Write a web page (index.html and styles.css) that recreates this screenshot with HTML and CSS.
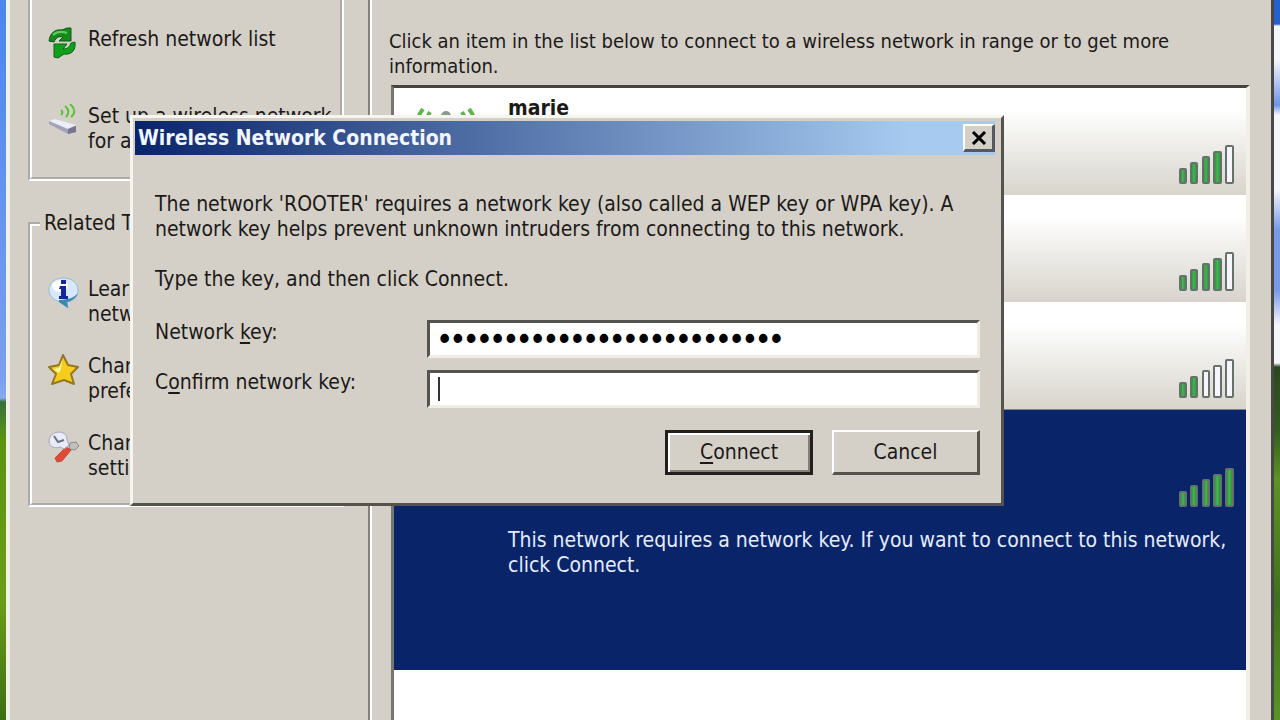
FILE: index.html
```html
<!DOCTYPE html>
<html lang="en">
<head>
    <meta charset="UTF-8">
    <title>Wireless Network Connection</title>
    <link rel="stylesheet" href="styles.css">
</head>
<body>
    <svg class="sprites" aria-hidden="true">
        <linearGradient id="bar-fill" x1="0" x2="1" y1="0" y2="0">
            <stop offset="0" stop-color="#2a8a40"/>
            <stop offset="0.5" stop-color="#45b552"/>
            <stop offset="1" stop-color="#1f8a38"/>
        </linearGradient>
        <symbol id="bars" viewBox="0 0 58 42">
            <rect class="bar b1" x="2" y="25" width="6" height="14" rx="1"/>
            <rect class="bar b2" x="13" y="19" width="6" height="20" rx="1"/>
            <rect class="bar b3" x="25" y="13" width="6" height="26" rx="1"/>
            <rect class="bar b4" x="36" y="8" width="7" height="31" rx="1"/>
            <rect class="bar b5" x="48" y="2" width="7" height="37" rx="1"/>
        </symbol>
    </svg>

    <div class="window">
        <aside class="sidebar">
            <section class="group group-top">
                <a class="task" href="#">
                    <svg class="icon" viewBox="0 0 32 32">
                        <path d="M1 14C2 6 7 2 14 3l5-2h4v13H11l4-4c-4-1-7 0-9 5z" fill="#178a1c" stroke="#0b5a12"/>
                        <path d="M5 8c4-4 8-4 14-2" fill="none" stroke="#5fc95a" stroke-width="2"/>
                        <path d="M27 15c1 8-3 13-11 12l-6 4-4-1V17h13l-4 5c5 0 7-3 8-6z" fill="#12a01c" stroke="#0b6514"/>
                    </svg>
                    <span>Refresh network list</span>
                </a>
                <a class="task" href="#">
                    <svg class="icon" viewBox="0 0 32 32">
                        <path d="M1 17l5-1 22 6v6l-8 2L1 20z" fill="#a3a2b8"/>
                        <path d="M1 17l6-2 21 6-8 4z" fill="#eeeef8"/>
                        <path d="M20 25v5l8-2v-6z" fill="#77758e"/>
                        <path d="M13 6q3 2 0 5M17 2q6 5 1 11M22 0q8 7 1 13" fill="none" stroke="#58c239" stroke-width="2"/>
                    </svg>
                    <span>Set up a wireless network for a home or small office</span>
                </a>
            </section>
            <fieldset class="group">
                <legend>Related Tasks</legend>
                <a class="task" href="#">
                    <svg class="icon" viewBox="0 0 32 32">
                        <path d="M15 1C7 1 1 6 1 13c0 6 5 10 11 12l8 6-1-6c7-1 11-5 11-12C30 6 24 1 15 1z" fill="#d6e9fa" stroke="#9dbad6"/>
                        <path d="M11 25l9 6-1-6c5-1 9-4 11-9-4 5-11 7-19 7z" fill="#3a86b4"/>
                        <ellipse cx="12" cy="9" rx="8" ry="6" fill="#fff"/>
                        <path d="M12 9h6v10h2v3h-9v-3h2v-7h-2zM13 3h5v4h-5z" fill="#14279c"/>
                    </svg>
                    <span>Learn about wireless networking</span>
                </a>
                <a class="task" href="#">
                    <svg class="icon" viewBox="0 0 32 32">
                        <path d="M15 1l5 10 10 2-7 7 3 10-10-4-12 4 4-10-7-7 10-2z" fill="#f4cd1d" stroke="#967720" stroke-width="2" stroke-linejoin="round"/>
                        <path d="M14 6l-3 8-6 1 6 4 2-4z" fill="#fff59a"/>
                    </svg>
                    <span>Change the order of preferred networks</span>
                </a>
                <a class="task" href="#">
                    <svg class="icon" viewBox="0 0 32 32">
                        <path d="M22 12l6-1 3 4-4 4-6-1z" fill="#c2c0bc" stroke="#8c8a86"/>
                        <path d="M18 16l5 3-9 11-5 1-2-4z" fill="#e24a35" stroke="#b8503f"/>
                        <path d="M12 1C5 1 1 5 1 11c1 5 6 7 11 5l4 2 5-4-2-5c0-5-2-7-7-8z" fill="#e9ebf8" stroke="#a3a5b8"/>
                        <path d="M6 5l4 6 6-2" fill="none" stroke="#6f7286" stroke-width="2"/>
                    </svg>
                    <span>Change advanced<br>settings</span>
                </a>
            </fieldset>
        </aside>

        <main class="content">
            <p class="intro">Click an item in the list below to connect to a wireless network in range or to get more information.</p>
            <ul class="networks">
                <li class="network">
                    <svg class="antenna" viewBox="0 0 64 40">
                        <path d="M9 1Q-3 16 9 32M16 4Q8 16 16 28M55 1q12 15 0 31M48 4q8 12 0 24" fill="none" stroke="#5fb44a" stroke-width="4"/>
                        <circle cx="32" cy="8" r="5" fill="#8d9a90"/>
                        <path d="M30 12h4v26h-4z" fill="#777"/>
                    </svg>
                    <div class="info"><strong>marie</strong></div>
                    <svg class="signal s4" viewBox="0 0 58 42"><use href="#bars"/></svg>
                </li>
                <li class="network">
                    <div class="info"></div>
                    <svg class="signal s4" viewBox="0 0 58 42"><use href="#bars"/></svg>
                </li>
                <li class="network">
                    <div class="info"></div>
                    <svg class="signal s2" viewBox="0 0 58 42"><use href="#bars"/></svg>
                </li>
                <li class="network selected">
                    <div class="info">
                        <div class="security">
                            <svg class="lock" viewBox="0 0 16 20">
                                <path d="M4 9V5q4-6 8 0v4" fill="none" stroke="#b9b08a" stroke-width="2"/>
                                <path d="M1 8h14v8q-7 6-14 0z" fill="#e6c04a"/>
                            </svg>
                            <span>Security-enabled wireless network</span>
                        </div>
                        <p>This network requires a network key. If you want to connect to this network, click Connect.</p>
                    </div>
                    <svg class="signal s5" viewBox="0 0 58 42"><use href="#bars"/></svg>
                </li>
            </ul>
        </main>
    </div>

    <form class="dialog" role="dialog" aria-labelledby="dialog-title">
        <header class="titlebar">
            <h1 id="dialog-title">Wireless Network Connection</h1>
            <button type="button" class="close" aria-label="Close">
                <svg viewBox="0 0 16 14"><path d="M2 1l12 12M14 1L2 13" stroke="#000" stroke-width="3"/></svg>
            </button>
        </header>
        <div class="dialog-body">
            <p>The network 'ROOTER' requires a network key (also called a WEP key or WPA key). A network key helps prevent unknown intruders from connecting to this network.</p>
            <p>Type the key, and then click Connect.</p>
            <div class="field">
                <label for="key">Network <u>k</u>ey:</label>
                <input type="password" id="key" value="abcdefghijklmnopqrstuvwxyz">
            </div>
            <div class="field">
                <label for="confirm">C<u>o</u>nfirm network key:</label>
                <input type="password" id="confirm" class="active">
            </div>
            <div class="actions">
                <button type="button" class="btn default"><span><u>C</u>onnect</span></button>
                <button type="button" class="btn"><span>Cancel</span></button>
            </div>
        </div>
    </form>
</body>
</html>
```

FILE: styles.css
```css
* {
    box-sizing: border-box;
}
body {
    margin: 0;
    height: 100vh;
    overflow: hidden;
    padding: 0 6px;
    font-family: "DejaVu Sans Condensed", "DejaVu Sans", sans-serif;
    font-size: 21px;
    line-height: 25px;
    color: #1c1a18;
    background:
        linear-gradient(#2560d0 0 24px, #f4f6fc 26px 60px, #6f94e6 105px, #f4f6fc 115px 190px, #7799e8 230px 290px, #f4f6fc 325px 363px, #2c4720 367px, #335c22 430px, #5d9424 480px, #3f6f20 600px, #5a9424 720px) right / 8px 100% no-repeat,
        linear-gradient(#4a86ee, #7aa0f0 380px, #8aaaf0 398px, #39703a 402px, #5a9412 440px, #6d9c18 600px, #3b6f14 720px);
}
p, h1, ul {
    margin: 0;
    padding: 0;
}
.sprites {
    position: absolute;
    width: 0;
    height: 0;
}
.window {
    display: flex;
    height: 100%;
    background: #d4d0c8;
    border-left: 4px solid #f2f2e8;
    border-right: 3px solid #4a4844;
}

/* task pane */
.sidebar {
    width: 360px;
    flex: none;
    padding: 0 24px 0 18px;
    border-right: 2px solid #848078;
}
.group {
    margin: 0 0 30px;
    border: 4px groove #fff;
    padding: 41px 0 0 16px;
    height: 296px;
}
.group-top {
    border-top: 0;
    height: 181px;
    padding-top: 27px;
}
.group legend {
    padding: 0 4px;
    margin-left: -8px;
}
.task {
    display: flex;
    gap: 8px;
    height: 77px;
    color: inherit;
    text-decoration: none;
}
.icon {
    width: 32px;
    height: 32px;
    flex: none;
}

/* network list */
.content {
    flex: 1;
    display: flex;
    flex-direction: column;
    padding: 29px 21px 0 17px;
    border-left: 2px solid #fff;
}
.intro {
    margin-bottom: 6px;
    font-size: 20px;
}
.networks {
    flex: 1;
    margin-left: 2px;
    list-style: none;
    background: #fff;
    border: 3px solid #45443f;
    border-left-color: #77756f;
    border-right: 4px solid #f1efe8;
    border-bottom: 0;
}
.network {
    display: flex;
    justify-content: space-between;
    align-items: flex-start;
    height: 107px;
    padding: 8px 10px 0 114px;
    position: relative;
    background: linear-gradient(#fff 20%, #edece8 55%, #d8d4cc);
}
.antenna {
    position: absolute;
    left: 20px;
    top: 20px;
    width: 64px;
    height: 40px;
}
.info {
    flex: 1;
}
.signal {
    width: 58px;
    height: 42px;
    margin-top: 48px;
}
.bar {
    fill: url(#bar-fill);
    stroke: #66716c;
    stroke-width: 2;
}
.b3 {
    fill: var(--third, url(#bar-fill));
}
.b4 {
    fill: var(--fourth, url(#bar-fill));
}
.b5 {
    fill: var(--fifth, url(#bar-fill));
}
.s4 {
    --fifth: #f6f5fb;
}
.s2 {
    --third: #f6f5fb;
    --fourth: #f6f5fb;
    --fifth: #f6f5fb;
}
.selected {
    height: 261px;
    color: #e4ecff;
    background: #0a246a;
    border-top: 1px solid #7c8398;
}
.selected .signal {
    margin-top: 49px;
}
.selected .info {
    padding-top: 65px;
    margin-right: -58px;
}
.security {
    display: flex;
    gap: 11px;
    margin-bottom: 20px;
}
.lock {
    width: 16px;
    height: 25px;
}

/* key prompt */
.dialog {
    position: absolute;
    left: 130px;
    top: 115px;
    width: 874px;
    background: #d4d0c8;
    border: 3px solid #55534e;
    border-top-color: #f6f5f0;
    border-left-color: #f6f5f0;
}
.titlebar {
    display: flex;
    align-items: center;
    justify-content: space-between;
    height: 34px;
    margin: 3px 6px 0 2px;
    padding: 0 0 0 3px;
    background: linear-gradient(90deg, #0a246a, #a6caf0 90%);
}
.titlebar h1 {
    font-size: 21px;
    line-height: 25px;
    color: #f2f6ff;
}
.close {
    display: flex;
    align-items: center;
    justify-content: center;
    width: 32px;
    height: 28px;
    padding: 0;
    background: #d4d0c8;
    border: 2px solid #fff;
    border-right: 3px solid #55595f;
    border-bottom: 3px solid #55595f;
}
.close svg {
    width: 16px;
    height: 14px;
}
.dialog-body {
    padding: 37px 21px 28px 22px;
}
.dialog-body p {
    margin-bottom: 25px;
}
.dialog-body p + p {
    margin-bottom: 28px;
}
.field {
    display: flex;
    margin-bottom: 12px;
}
.field label {
    width: 272px;
    flex: none;
}
.field input {
    flex: 1;
    min-width: 0;
    height: 38px;
    padding: 0 8px;
    font-family: inherit;
    font-size: 25px;
    color: #000;
    -webkit-text-stroke: 2px #000;
    background: #fff;
    border: 3px solid #55534e;
    border-right-color: #efede6;
    border-bottom-color: #efede6;
    outline: none;
}
/* text cursor */
.field .active {
    background: linear-gradient(#333, #333) 8px center / 2px 24px no-repeat #fff;
}
u {
    text-underline-offset: 3px;
}
.actions {
    display: flex;
    justify-content: flex-end;
    gap: 19px;
    padding-top: 10px;
}
.btn {
    width: 148px;
    height: 45px;
    padding: 0;
    font: inherit;
    color: inherit;
    background: #d4d0c8;
    border: 2px solid #fff;
    border-right: 3px solid #55534e;
    border-bottom: 3px solid #55534e;
}
.default {
    border: 3px solid #22201e;
    box-shadow: inset 2px 2px #fff, inset -2px -2px #848078;
}
```
